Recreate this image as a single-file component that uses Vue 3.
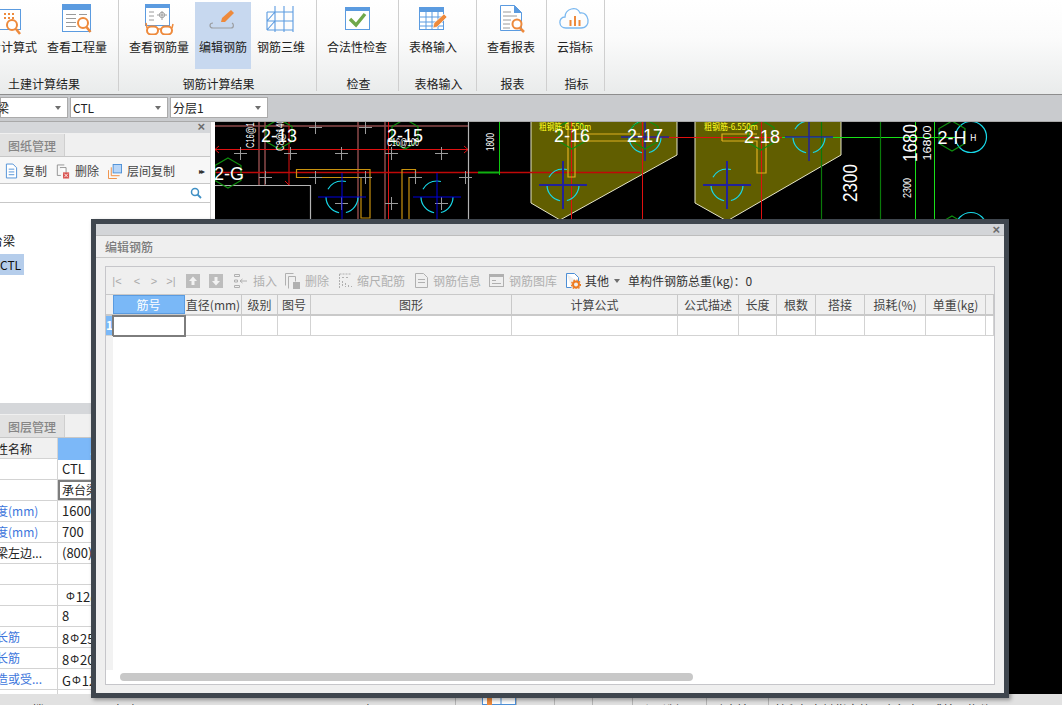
<script setup>
const crosses = [[315,127],[365,127],[240,153],[290,153],[341,153],[391,153],[441,153],[265,177],[315,177],[365,177],[415,177],[465,177],[341,203],[391,203],[441,203]]
const hexes = [
  { x: 279, y: 134, r: 15, c: '#0f8f0f' }, { x: 405, y: 134, r: 15, c: '#0f8f0f' }, { x: 228, y: 173, r: 15, c: '#0f8f0f' },
  { x: 572, y: 134, r: 15, c: '#0f8f0f' }, { x: 645, y: 134, r: 15, c: '#0f8f0f' }, { x: 761, y: 135, r: 15, c: '#0f8f0f' },
  { x: 952, y: 136, r: 15, c: '#0f8f0f' }, { x: 952, y: 231, r: 15, c: '#0f8f0f' }
].map(h => ({
  ...h,
  points: [0, 1, 2, 3, 4, 5].map(i => {
    const a = Math.PI / 3 * i - Math.PI / 2
    return `${h.x + h.r * Math.cos(a)},${h.y + h.r * Math.sin(a)}`
  }).join(' ')
}))
const bars = [
  { x: 342, y: 197, c: '#0000e0', w: 1 }, { x: 437, y: 197, c: '#0000e0', w: 1 },
  { x: 563, y: 185, c: '#22229a', w: 2 }, { x: 645, y: 137, c: '#22229a', w: 1.5 },
  { x: 727, y: 185, c: '#22229a', w: 2 }, { x: 809, y: 137, c: '#22229a', w: 1.5 }
]
const labels = [
  { t: '2-13', x: 279, y: 142 }, { t: '2-15', x: 405, y: 142 }, { t: '2-G', x: 229, y: 180 },
  { t: '2-16', x: 572, y: 142 }, { t: '2-17', x: 645, y: 142 }, { t: '2-18', x: 762, y: 143 }, { t: '2-H', x: 952, y: 144 }
]
const columns = [
  ['筋号', 72], ['直径(mm)', 57], ['级别', 36], ['图号', 33], ['图形', 201], ['计算公式', 166],
  ['公式描述', 61], ['长度', 38], ['根数', 39], ['搭接', 49], ['损耗(%)', 61], ['单重(kg)', 60], ['', 8]
]
const props = [
  { name: '', val: 'CTL' }, { name: '', val: '承台梁', active: true },
  { name: '度(mm)', val: '1600', link: true }, { name: '度(mm)', val: '700', link: true },
  { name: '梁左边...', val: '(800)' }, { name: '', val: '' },
  { name: '', pre: '', sym: true, val: '12@100', pad: true }, { name: '', val: '8' },
  { name: '长筋', pre: '8', sym: true, val: '25', link: true },
  { name: '长筋', pre: '8', sym: true, val: '20', link: true },
  { name: '造或受...', pre: 'G', sym: true, val: '12', link: true }, { name: '', val: '' }
]
</script>

<template>
  <div class="app">
    <header class="ribbon">
      <section class="group g1">
        <div class="btns">
          <div class="rb">
            <svg width="32" height="32" viewBox="0 0 32 32">
              <rect x="8.5" y="6.5" width="21" height="20" fill="#fff" stroke="#5b9be0"/>
              <rect x="13" y="10" width="2" height="2" fill="#ee8a3c"/><rect x="17" y="10" width="2" height="2" fill="#ee8a3c"/><rect x="21" y="10" width="2" height="2" fill="#ee8a3c"/>
              <rect x="13" y="14" width="2" height="2" fill="#ee8a3c"/><rect x="17" y="14" width="2" height="2" fill="#ee8a3c"/><rect x="21" y="14" width="2" height="2" fill="#ee8a3c"/>
              <circle cx="21" cy="22" r="5" fill="#fff" stroke="#ee8a3c" stroke-width="2"/>
              <path d="M25 26l4 5" stroke="#ee8a3c" stroke-width="2.5"/>
            </svg>
            <span>查看计算式</span>
          </div>
          <div class="rb">
            <svg width="32" height="32" viewBox="0 0 32 32">
              <rect x="1.5" y="1.5" width="28" height="27" fill="#fff" stroke="#5b9be0"/>
              <rect x="1" y="1" width="29" height="6" fill="#5b9be0"/>
              <path d="M5 11.5h10M5 15.5h10M5 19.5h10M5 23.5h10M18 11.5h8" stroke="#9a9a9a"/>
              <circle cx="22" cy="20" r="5" fill="#fff" stroke="#ee8a3c" stroke-width="2"/>
              <path d="M25.5 24l4 5" stroke="#ee8a3c" stroke-width="2.5"/>
            </svg>
            <span>查看工程量</span>
          </div>
        </div>
        <div class="glabel">土建计算结果</div>
      </section>
      <section class="group g2">
        <div class="btns">
          <div class="rb">
            <svg width="32" height="32" viewBox="0 0 32 32">
              <rect x="2.5" y="1.5" width="24" height="21" fill="#fff" stroke="#5b9be0"/>
              <rect x="2" y="1" width="25" height="4" fill="#5b9be0"/>
              <path d="M6 9h5M6 13h5M6 17h5M14 12h10M19 8v9" stroke="#9a9a9a" fill="none"/>
              <rect x="16.5" y="9.5" width="5" height="5" rx="2" fill="none" stroke="#9a9a9a"/>
              <rect x="4" y="23.5" width="11" height="8" rx="4" fill="#fff" stroke="#ee8a3c" stroke-width="2"/>
              <rect x="18" y="23.5" width="11" height="8" rx="4" fill="#fff" stroke="#ee8a3c" stroke-width="2"/>
              <path d="M15 26h3M4 25l-1-5M29 25l1-4" stroke="#ee8a3c" stroke-width="1.5"/>
            </svg>
            <span>查看钢筋量</span>
          </div>
          <div class="rb on">
            <svg width="32" height="32" viewBox="0 0 32 32">
              <path d="M6 20c-4 0-4 5 0 5h18c3 0 3-4 1-5" fill="none" stroke="#9b9ea2" stroke-width="1.2"/>
              <path d="M14 19l1-4 9-8 3 3-9 9z" fill="#ee8a3c"/>
            </svg>
            <span>编辑钢筋</span>
          </div>
          <div class="rb">
            <svg width="32" height="32" viewBox="0 0 32 32">
              <path d="M2 9h26M2 18h26M2 27h26M10 3v26M19 3v26M28 3v26M2 9v18M2 18l8-9M2 27l8-9" stroke="#5b9be0" fill="none" stroke-width="1.1"/>
            </svg>
            <span>钢筋三维</span>
          </div>
        </div>
        <div class="glabel">钢筋计算结果</div>
      </section>
      <section class="group g3">
        <div class="btns">
          <div class="rb">
            <svg width="32" height="32" viewBox="0 0 32 32">
              <rect x="4.5" y="4.5" width="24" height="22" fill="#fff" stroke="#5b9be0"/>
              <rect x="4" y="4" width="25" height="4" fill="#5b9be0"/>
              <path d="M9 16l6 6 9-11" fill="none" stroke="#6fa84a" stroke-width="3.4"/>
            </svg>
            <span>合法性检查</span>
          </div>
        </div>
        <div class="glabel">检查</div>
      </section>
      <section class="group g4">
        <div class="btns">
          <div class="rb">
            <svg width="32" height="32" viewBox="0 0 32 32">
              <rect x="2.5" y="4.5" width="24" height="22" fill="#fff" stroke="#5b9be0"/>
              <rect x="2" y="4" width="25" height="5" fill="#5b9be0"/>
              <path d="M3 14h23M3 19h23M3 23h23M9 9v17M15 9v17M21 9v17" stroke="#5b9be0"/>
              <path d="M16 25l1-5 10-9 3 3-10 10z" fill="#ee8a3c" stroke="#fff" stroke-width=".6"/>
            </svg>
            <span>表格输入</span>
          </div>
        </div>
        <div class="glabel">表格输入</div>
      </section>
      <section class="group g5">
        <div class="btns">
          <div class="rb">
            <svg width="32" height="32" viewBox="0 0 32 32">
              <path d="M5.5 2.5h14l7 7v18h-21z" fill="#fff" stroke="#5b9be0"/>
              <path d="M19 2l8 8h-8z" fill="#5b9be0"/>
              <path d="M8 9h8M8 13h14M8 17h8M8 21h7M8 25h7" stroke="#9a9a9a"/>
              <circle cx="22" cy="21" r="4.5" fill="#fff" stroke="#ee8a3c" stroke-width="2"/>
              <path d="M25 25l4 4" stroke="#ee8a3c" stroke-width="2.5"/>
            </svg>
            <span>查看报表</span>
          </div>
        </div>
        <div class="glabel">报表</div>
      </section>
      <section class="group g6">
        <div class="btns">
          <div class="rb narrow">
            <svg width="32" height="32" viewBox="0 0 32 32">
              <path d="M7 25c-8 0-8-11-1-11 0-8 12-12 15-4 9-2 12 15 1 15z" fill="none" stroke="#7ab8f0" stroke-width="1.3"/>
              <path d="M11.5 23v-6M16 23V13M20.500 23v-6" stroke="#ee8a3c" stroke-width="2"/>
            </svg>
            <span>云指标</span>
          </div>
        </div>
        <div class="glabel">指标</div>
      </section>
    </header>

    <div class="selbar">
      <div class="sel first"><span>梁</span><i class="caret"></i></div>
      <div class="sel"><span>CTL</span><i class="caret"></i></div>
      <div class="sel"><span>分层1</span><i class="caret"></i></div>
    </div>

    <main class="main">
      <aside class="panel">
        <section class="upper">
          <div class="pbar"><span class="x">×</span></div>
          <div class="tabs"><div class="tab">图纸管理</div></div>
          <div class="ptools">
            <svg class="ic" width="13" height="16" viewBox="0 0 14 16"><path d="M1.500.5h7l4 4v11h-11z" fill="#fff" stroke="#4d8fd6"/><path d="M4 6h6M4 9h6M4 12h6" stroke="#4d8fd6"/></svg>
            <span class="pt">复制</span>
            <svg class="ic" width="14" height="15" viewBox="0 0 16 16"><path d="M1.500.5h8M1.500.5v12h4" stroke="#8a8a8a" fill="none"/><path d="M4.500 3.500h7v6" stroke="#8a8a8a" fill="#fff"/><rect x="8" y="9" width="7" height="7" fill="#d9534f"/><path d="M9.500 10.500l4 4m0-4l-4 4" stroke="#fff"/></svg>
            <span class="pt">删除</span>
            <svg class="ic" width="14" height="15" viewBox="0 0 15 16"><rect x="5.500" y=".5" width="9" height="9" fill="#b8d6f8" stroke="#4d8fd6"/><path d="M3.500 3.500v9h9M.5 6.500v9h9" fill="none" stroke="#ee8a3c"/></svg>
            <span class="pt">层间复制</span>
            <span class="more">▸▸</span>
          </div>
          <div class="psearch">
            <svg width="12" height="12" viewBox="0 0 12 12"><circle cx="5" cy="5" r="3.500" fill="none" stroke="#3f8fc4" stroke-width="1.500"/><path d="M7.500 7.500l3.500 3.500" stroke="#3f8fc4" stroke-width="1.800"/></svg>
          </div>
          <div class="tree">
            <div class="node">台梁</div>
            <div class="node sel-node">CTL</div>
          </div>
        </section>
        <section class="lower">
          <div class="pbar"></div>
          <div class="tabs"><div class="tab">图层管理</div></div>
          <div class="prow head"><div class="c1">性名称</div><div class="c2">属性值</div><div class="c3"></div></div>
          <div v-for="(p, i) in props" :key="i" class="prow">
            <div class="c1" :class="{ link: p.link }">{{ p.name }}</div>
            <div class="c2" :class="{ active: p.active, pad: p.pad }">{{ p.pre }}<span v-if="p.sym" class="sym">Φ</span>{{ p.val }}</div>
            <div class="c3"></div>
          </div>
        </section>
      </aside>

      <div class="canvas">
        <svg width="847" height="573" viewBox="215 122 847 573">
          <rect x="215" y="122" width="847" height="573" fill="#000"/>
          <!-- olive footings -->
          <path d="M531 120V203L560 220L677 155V120Z" fill="#615e00" stroke="#e6e6c8" stroke-width="1"/>
          <path d="M695 120V203L727 221L841 155V120Z" fill="#615e00" stroke="#e6e6c8" stroke-width="1"/>
          <!-- axis & walls -->
          <path d="M215 126H468" stroke="#8c4a4a" stroke-width="1.500"/>
          <path d="M259 122V185M265 122V185M358 122V225M385 122V225" stroke="#8c4a4a" stroke-width="1.500" fill="none"/>
          <path d="M215 149.500H468" stroke="#e01010"/>
          <path d="M219 146l-4 3.500 4 3.500M464 146l4 3.500-4 3.500" stroke="#e01010" fill="none"/>
          <path d="M289 122V185M285 181l4 4M388.500 122V225M571.500 122V225M642.500 122V225M761.500 122V225" stroke="#e01010" fill="none"/>
          <path d="M215 172.500H478M500 172.500H640" stroke="#c00808" stroke-width="1.500"/>
          <path d="M640 137.500H782" stroke="#e01010"/>
          <path d="M782 137.500H960" stroke="#18e018"/>
          <path d="M478 172.500H499" stroke="#10b010" stroke-width="2"/>
          <path d="M499.500 122V175" stroke="#10c810"/>
          <path d="M821.500 122V225M880.500 122V225" stroke="#0a7a0a" stroke-width="1.200"/>
          <path d="M915.500 122V225M934.500 122V225" stroke="#18e018"/>
          <path d="M215 185.500H310.500V225M468.500 122V225" stroke="#b4b4b4" fill="none" stroke-width="1.200"/>
          <!-- rebars -->
          <path d="M296.500 169.500H370V218H361V177.500H296.500Z M402 225V169.500H415.500V177.500H409V225" fill="none" stroke="#c8920e" stroke-width="1.200"/>
          <path d="M568 122V177H575V141H640M575 134H640" fill="none" stroke="#e0b020" stroke-width="1.200"/>
          <path d="M722 141V134H757M722 141H757V173H766V134" fill="none" stroke="#e0b020" stroke-width="1.200"/>
          <!-- crosses -->
          <g stroke="#9c9c9c" stroke-width="1">
            <path v-for="(c, i) in crosses" :key="i" :d="`M${c[0] - 6} ${c[1]}.5H${c[0] + 7}M${c[0]}.5 ${c[1] - 6}V${c[1] + 7}`"/>
          </g>
          <!-- cyan arcs with blue crosses -->
          <g v-for="(b, i) in bars" :key="'b' + i" fill="none">
            <circle :cx="b.x" :cy="b.y" r="16" stroke="#18d8e8" stroke-width="1.200" pathLength="100" stroke-dasharray="21 7 22 8 21 21"/>
            <path :d="`M${b.x - 24} ${b.y}H${b.x + 24}M${b.x} ${b.y - 24}V${b.y + 24}`" :stroke="b.c" :stroke-width="b.w"/>
          </g>
          <circle cx="971" cy="137" r="15.500" fill="none" stroke="#18d8e8" stroke-width="1.200"/>
          <circle cx="971" cy="228" r="15.500" fill="none" stroke="#18d8e8" stroke-width="1.200"/>
          <!-- hexagons and labels -->
          <polygon v-for="(h, i) in hexes" :key="'h' + i" :points="h.points" fill="none" :stroke="h.c" stroke-width="1.200"/>
          <text v-for="(l, i) in labels" :key="'l' + i" :x="l.x" :y="l.y" class="axis" text-anchor="middle" fill="#fff">{{ l.t }}</text>
          <text x="539" y="130" class="tiny" fill="#ffff20" textLength="52" lengthAdjust="spacingAndGlyphs">粗钢筋-6.550m</text>
          <text x="704" y="130" class="tiny" fill="#ffff20" textLength="54" lengthAdjust="spacingAndGlyphs">粗钢筋-6.550m</text>
          <text x="970" y="141" class="tiny" fill="#fff">H</text>
          <text transform="translate(857 183) rotate(-90)" class="dim" text-anchor="middle" fill="#fff" textLength="38" lengthAdjust="spacingAndGlyphs">2300</text>
          <text transform="translate(917 143) rotate(-90)" class="dim" text-anchor="middle" fill="#fff" textLength="38" lengthAdjust="spacingAndGlyphs">1680</text>
          <text transform="translate(931 143) rotate(-90)" class="small" text-anchor="middle" fill="#fff" textLength="35" lengthAdjust="spacingAndGlyphs">16800</text>
          <text transform="translate(911 188) rotate(-90)" class="small" text-anchor="middle" fill="#fff" textLength="20" lengthAdjust="spacingAndGlyphs">2300</text>
          <text transform="translate(494 142) rotate(-90)" class="small" text-anchor="middle" fill="#fff" textLength="18" lengthAdjust="spacingAndGlyphs">1800</text>
          <text transform="translate(254 131) rotate(-90)" class="small" text-anchor="middle" fill="#fff" textLength="34" lengthAdjust="spacingAndGlyphs">C16@150</text>
          <text transform="translate(284 135) rotate(-90)" class="small" text-anchor="middle" fill="#fff" textLength="32" lengthAdjust="spacingAndGlyphs">C8@140</text>
          <text x="403" y="146" class="small" text-anchor="middle" fill="#fff" textLength="32" lengthAdjust="spacingAndGlyphs">C16@100</text>
        </svg>
      </div>
    </main>

    <footer class="status">
      <span class="st w1">楼层</span>
      <span class="st w2">标高</span>
      <span class="st w3">层高</span>
      <span class="cell c-a"></span>
      <span class="cell c-b">
        <svg width="32" height="11" viewBox="0 0 32 11"><rect x="4" y="1" width="5" height="10" fill="#ee8a3c"/><path d="M9 2.500H18V11" stroke="#4d8fd6" fill="none"/></svg>
      </span>
      <span class="cell c-c"></span>
      <span class="cell c-d"></span>
      <span class="cell c-e"></span>
      <span class="cell c-f">跨层选择</span>
      <span class="cell c-g">动态输入</span>
      <span class="cell c-h">按鼠标左键指定第一个角点，或拾取构件图元</span>
    </footer>

    <div class="dialog">
      <div class="dtitle"><span class="x">×</span></div>
      <div class="dhead">编辑钢筋</div>
      <div class="dbody">
        <div class="frame">
          <div class="dtools">
            <span class="nav n1">|&lt;</span><span class="nav n2">&lt;</span><span class="nav n3">&gt;</span><span class="nav n4">&gt;|</span>
            <svg class="t-up" width="14" height="14" viewBox="0 0 14 14"><rect width="14" height="14" fill="#bdbdbd"/><path d="M7 2.500L11 7H8.500v4h-3V7H3z" fill="#f2f2f2"/></svg>
            <svg class="t-down" width="14" height="14" viewBox="0 0 14 14"><rect width="14" height="14" fill="#bdbdbd"/><path d="M7 11.500L11 7H8.500V3h-3v4H3z" fill="#f2f2f2"/></svg>
            <svg class="t-ins" width="14" height="16" viewBox="0 0 14 16"><path d="M.5 1.500h5v2h-5zM.5 12.500h5v2h-5zM6 8h7M6 8l2.500-2M6 8l2.500 2M.5 7h3v2h-3z" fill="none" stroke="#b0b0b0"/></svg>
            <span class="dis">插入</span>
            <svg class="t-del" width="15" height="16" viewBox="0 0 15 16"><path d="M.5 12.500V.5h8M3.500 15.500v-12h7v5" fill="none" stroke="#b0b0b0"/><rect x="8" y="9" width="7" height="7" fill="#b0b0b0"/></svg>
            <span class="dis">删除</span>
            <svg class="t-scale" width="13" height="15" viewBox="0 0 13 15"><path d="M.5 1v14M.5 1h12M3.500 8v6M6.500 10v4M9.500 12v2M12.500 13v1M3 4.500h2M7 4.500h2" stroke="#b0b0b0" fill="none" stroke-dasharray="2 1"/></svg>
            <span class="dis">缩尺配筋</span>
            <svg class="t-info" width="13" height="15" viewBox="0 0 13 15"><path d="M.5.500h8l4 4v10H.5z" fill="none" stroke="#b0b0b0"/><path d="M3 6.500h7M3 9.500h7" stroke="#b0b0b0"/></svg>
            <span class="dis">钢筋信息</span>
            <svg class="t-lib" width="15" height="13" viewBox="0 0 15 13"><rect x=".5" y=".5" width="14" height="12" fill="none" stroke="#b0b0b0"/><rect x="1" y="1" width="13" height="2" fill="#b0b0b0"/><path d="M3 6.500h4M3 9.500h9" stroke="#b0b0b0"/></svg>
            <span class="dis">钢筋图库</span>
            <svg class="t-oth" width="16" height="16" viewBox="0 0 16 16"><path d="M1.500.5h8l4 4v5M1.500.5v14h5" fill="#fff" stroke="#4d8fd6"/><circle cx="11" cy="11.500" r="3" fill="none" stroke="#ee7a20" stroke-width="2"/><circle cx="11" cy="11.500" r="4.500" fill="none" stroke="#ee7a20" stroke-width="1.200" stroke-dasharray="1.500 1.500"/></svg>
            <span class="act">其他</span>
            <i class="caret t-car"></i>
            <span class="act total">单构件钢筋总重(kg)：0</span>
          </div>
          <div class="grid">
            <div class="ghead">
              <div class="corner"></div>
              <div v-for="(c, i) in columns" :key="i" class="gc" :class="{ cur: i === 0 }" :style="{ width: c[1] + 'px' }">{{ c[0] }}</div>
            </div>
            <div class="grow">
              <div class="rownum">1</div>
              <div v-for="(c, i) in columns" :key="i" class="gd" :class="{ curcell: i === 0 }" :style="{ width: c[1] + 'px' }"></div>
            </div>
            <div class="gempty"><div class="strip"></div></div>
            <div class="hscroll"></div>
          </div>
        </div>
      </div>
    </div>
  </div>
</template>

<style scoped>
.app { position: relative; width: 1062px; height: 705px; overflow: hidden; display: flex; flex-direction: column; background: #fff; font: 12px/16px "Noto Sans CJK SC", "Noto Sans", sans-serif; color: #222; }
.ribbon { display: flex; height: 94px; flex: none; margin-left: -30px; width: 1092px; background: linear-gradient(#fff 0, #fbfbfb 40%, #e9ebeb 100%); }
.group { box-sizing: border-box; height: 91px; border-right: 1px solid #cfcfcf; flex: none; }
.g1 { width: 149px; } .g2 { width: 198px; } .g3 { width: 82px; } .g4 { width: 78px; } .g5 { width: 70px; } .g6 { width: 58px; }
.btns { display: flex; gap: 2px; height: 67px; margin-top: 2px; padding-left: 6px; }
.g1 .btns { padding-left: 3px; }
.rb { padding: 1px 4px 0; height: 67px; box-sizing: border-box; display: flex; flex-direction: column; align-items: center; white-space: nowrap; }
.rb svg { display: block; flex: none; }
.rb span { margin-top: 4px; }
.rb.on { background: #c7d8ef; }
.glabel { margin-top: 7px; padding-left: 2px; text-align: center; line-height: 16px; white-space: nowrap; }
.g1 .glabel { padding-left: 0; }

.selbar { flex: none; height: 28px; box-sizing: border-box; border-top: 1px solid #8d8d8d; border-bottom: 1px solid #a9a9a9; background: #c9cbce; display: flex; gap: 2px; padding-top: 2px; }
.sel { box-sizing: border-box; width: 98px; height: 21px; background: #fff; border: 1px solid #ababab; display: flex; align-items: center; justify-content: space-between; padding: 0 3px 0 2px; font-size: 12px; }
.sel.first { width: 68px; padding-left: 0; }
.sel.first span { margin-left: -4px; }
.caret { display: block; width: 0; height: 0; border: 3.500px solid transparent; border-top: 4px solid #6e6e6e; border-bottom: 0; margin-right: 3px; }

.main { flex: 1; display: flex; min-height: 0; }
.panel { box-sizing: border-box; width: 215px; flex: none; border-right: 4px solid #fff; display: flex; flex-direction: column; }
.upper { height: 281px; flex: none; display: flex; flex-direction: column; box-sizing: border-box; border-right: 1px solid #d0d0d0; }
.lower { flex: 1; display: flex; flex-direction: column; overflow: hidden; min-height: 0; border-right: 1px solid #d0d0d0; }
.pbar { height: 11px; flex: none; background: #d5d7da; position: relative; }
.x { position: absolute; right: 4px; top: -3px; font: bold 13px/16px "Liberation Sans", sans-serif; color: #6b6b6b; }
.upper .pbar .x { right: 5px; }
.tabs { height: 24px; flex: none; background: #f0f0f0; border-bottom: 1px solid #c7c7c7; box-sizing: border-box; padding-top: 1px; }
.tab { width: 65px; height: 22px; box-sizing: border-box; background: #e2e2e2; border-right: 1px solid #cfcfcf; text-align: center; line-height: 23px; color: #868686; font-weight: 500; font-size: 12px; }
.ptools { height: 27px; flex: none; box-sizing: border-box; background: #f7f7f7; border-bottom: 1px solid #c7c7c7; display: flex; align-items: center; padding: 2px 0 0 5px; position: relative; }
.pt { color: #444; margin-left: 5px; margin-right: 9px; white-space: nowrap; }
.ic { flex: none; }
.more { position: absolute; left: 199px; top: 6px; font-size: 8px; letter-spacing: -2px; color: #333; }
.psearch { height: 19px; flex: none; box-sizing: border-box; border-bottom: 1px solid #c7c7c7; display: flex; align-items: center; justify-content: flex-end; padding-right: 8px; }
.tree { flex: 1; padding-top: 26px; }
.node { height: 24px; line-height: 24px; color: #111; text-indent: -9px; overflow: hidden; }
.sel-node { width: 24px; height: 21px; line-height: 21px; margin-top: 1px; background: #b5cdeb; overflow: hidden; text-indent: 0; }

.prow { display: grid; grid-template-columns: 58px 100px 1fr; height: 21px; flex: none; box-sizing: border-box; border-bottom: 1px solid #d3d3d3; line-height: 20px; font-size: 12px; }
.c1 { border-right: 1px solid #d3d3d3; overflow: hidden; white-space: nowrap; text-indent: -4px; }
.c2 { padding-left: 4px; white-space: nowrap; font-size: 13px; box-sizing: border-box; }
.c1.link { color: #3d76dc; }
.head { background: #f0f0f0; line-height: 22px; }
.head .c2 { background: #7cb8f8; color: #fff; padding-left: 32px; font-size: 12px; }
.head .c3 { background: #f0f0f0; }
.active { border: 2px solid #7d7d7d; line-height: 16px; padding-left: 2px; font-size: 12px; }
.pad { padding-left: 7px; }
.sym { font-size: 11px; vertical-align: 2px; margin: 0 1px; }

.canvas { flex: 1; min-width: 0; background: #000; overflow: hidden; }
.canvas svg { display: block; }
.axis { font: 18px "Liberation Sans", sans-serif; }
.dim { font: 20px "Liberation Sans", sans-serif; }
.small { font: 11px "Liberation Sans", sans-serif; }
.tiny { font: 9px "Noto Sans CJK SC", sans-serif; }

.status { flex: none; height: 11px; background: #e1e1e1; display: flex; overflow: hidden; position: relative; }
.st, .cell { position: absolute; top: 8px; white-space: nowrap; color: #333; }
.w1 { left: 32px; } .w2 { left: 115px; } .w3 { left: 350px; }
.cell { top: 0; height: 11px; box-sizing: border-box; border-left: 1px solid #b5b5b5; padding: 8px 0 0 6px; }
.c-a { left: 455px; width: 27px; }
.c-b { left: 482px; width: 34px; background: #fff; border: 1px solid #4d8fd6; border-top: 0; padding: 0; }
.c-b svg { display: block; }
.c-c { left: 516px; width: 38px; }
.c-d { left: 554px; width: 38px; }
.c-e { left: 592px; width: 40px; }
.c-f { left: 632px; width: 74px; }
.c-g { left: 706px; width: 62px; }
.c-h { left: 768px; width: 290px; }

.dialog { position: absolute; left: 91px; top: 219px; width: 918px; height: 479px; box-sizing: border-box; border: 5px solid #3f464e; background: #efefef; display: flex; flex-direction: column; box-shadow: 2px 2px 4px rgba(0,0,0,.35); }
.dtitle { height: 12px; flex: none; box-sizing: border-box; background: #d3d5d8; border-bottom: 1px solid #bdbdbd; position: relative; }
.dtitle .x { right: 4px; top: -2px; }
.dhead { height: 22px; flex: none; box-sizing: border-box; border-bottom: 1px solid #c8c8c8; line-height: 21px; padding-left: 9px; color: #7c7c7c; font-weight: 500; }
.dbody { flex: 1; min-height: 0; padding: 8px 9px; display: flex; }
.frame { flex: 1; box-sizing: border-box; border: 1px solid #c6c6ca; display: flex; flex-direction: column; min-width: 0; }
.dtools { height: 27px; flex: none; box-sizing: border-box; display: flex; align-items: center; padding-left: 6px; white-space: nowrap; }
.nav { color: #aaa; font: 11px/16px "Liberation Sans", sans-serif; width: 10px; text-align: center; }
.n2 { margin-left: 10px; } .n3 { margin-left: 7px; } .n4 { margin-left: 7px; }
.dis { color: #b0b0b0; margin-left: 5px; }
.act { color: #333; margin-left: 4px; }
.t-up { margin-left: 10px; } .t-down { margin-left: 9px; } .t-ins { margin-left: 11px; }
.t-del { margin-left: 8px; } .t-scale { margin-left: 10px; } .t-info { margin-left: 10px; }
.t-lib { margin-left: 8px; } .t-oth { margin-left: 8px; }
.t-car { margin-left: 5px; margin-right: 0; }
.total { margin-left: 8px; }
.grid { flex: 1; position: relative; display: flex; flex-direction: column; background: #fff; min-height: 0; }
.ghead { display: flex; height: 22px; flex: none; box-sizing: border-box; background: #f0f0f0; border-top: 1px solid #c9c9c9; border-bottom: 2px solid #c9c9c9; }
.corner { width: 7px; flex: none; }
.gc { box-sizing: border-box; border-right: 1px solid #c9c9c9; text-align: center; line-height: 19px; color: #444; white-space: nowrap; flex: none; overflow: hidden; }
.gc.cur { background: #7ab8f7; color: #fff; outline: 1px solid #5a9be0; outline-offset: -1px; }
.grow { display: flex; height: 20px; flex: none; box-sizing: border-box; border-bottom: 1px solid #d3d3d3; }
.rownum { width: 7px; flex: none; background: #7ab8f7; color: #fff; font-weight: 700; line-height: 18px; overflow: hidden; }
.gd { box-sizing: border-box; border-right: 1px solid #d3d3d3; flex: none; }
.gd.curcell { outline: 2px solid #7d7d7d; outline-offset: -1px; height: 20px; }
.gempty { flex: 1; min-height: 0; }
.strip { width: 7px; height: 334px; background: #f2f2f2; }
.hscroll { position: absolute; left: 14px; top: 379px; width: 573px; height: 8px; border-radius: 4px; background: #c8c8c8; }
</style>

<style>
html, body { margin: 0; overflow: hidden; }
</style>
